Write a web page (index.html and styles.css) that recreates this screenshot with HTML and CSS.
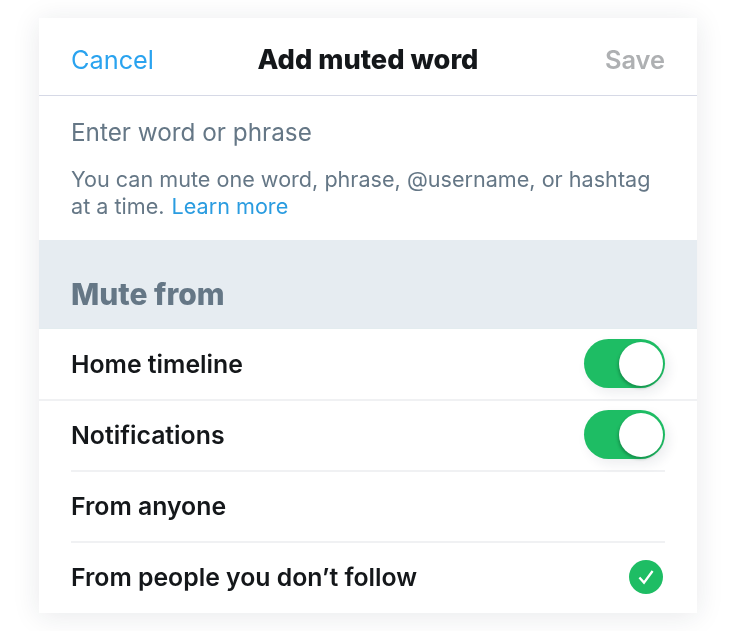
FILE: index.html
```html
<!DOCTYPE html>
<html lang="en">
<head>
<meta charset="utf-8">
<title>Add muted word</title>
<link rel="stylesheet" href="styles.css">
</head>
<body>
<main class="card">
  <header class="topbar">
    <span class="cancel">Cancel</span>
    <h1 class="title">Add muted word</h1>
    <span class="save">Save</span>
  </header>
  <section class="entry">
    <p class="placeholder">Enter word or phrase</p>
    <p class="help">You can mute one word, phrase, @username, or hashtag at a time. <span class="link">Learn more</span></p>
  </section>
  <h2 class="section-head">Mute from</h2>
  <ul class="rows">
    <li class="row row-full">
      <span class="row-label">Home timeline</span>
      <span class="toggle"><span class="knob"></span></span>
    </li>
    <li class="row">
      <span class="row-label">Notifications</span>
      <span class="toggle"><span class="knob"></span></span>
    </li>
    <li class="row">
      <span class="row-label">From anyone</span>
    </li>
    <li class="row row-last">
      <span class="row-label">From people you don’t follow</span>
      <svg class="check" viewBox="0 0 34 34" aria-hidden="true">
        <circle cx="17" cy="17" r="17" fill="#1ebd64"/>
        <path d="M10.4 17.4l4.6 5.2 8.6-11.6" fill="none" stroke="#fff" stroke-width="2.3"/>
      </svg>
    </li>
  </ul>
</main>
</body>
</html>
```
FILE: styles.css
```css
* { box-sizing: border-box; }
html, body { margin: 0; height: 631px; overflow: hidden; background: #fff; }
body {
  padding: 18px 39px;
  font-family: Inter, "Liberation Sans", sans-serif;
}
.card {
  width: 658px;
  height: 595px;
  background: #fff;
  box-shadow: 0 3px 26px rgba(30, 40, 60, 0.1);
  filter: blur(0.35px);
}
.topbar {
  height: 78px;
  padding: 5px 32px 0;
  display: grid;
  grid-template-columns: 1fr auto 1fr;
  align-items: center;
  border-bottom: 1px solid #d6d9e6;
  font-size: 25.3px;
}
.cancel { color: #2aa3ef; }
.title { margin: 0; font-size: 27.2px; font-weight: 800; color: #14171a; }
.save { color: #aeb0b2; font-weight: 600; font-size: 25.4px; justify-self: end; }
.entry { height: 144px; padding: 0 32px; color: #657786; }
.placeholder { margin: 0; padding-top: 21px; font-size: 24.3px; line-height: 30px; }
.help { margin: 0; padding-top: 19px; font-size: 21.6px; line-height: 27px; }
.link { color: #2a9ce0; margin-left: 1px; }
.section-head {
  margin: 0;
  height: 89px;
  padding: 36px 32px 0;
  background: #e6ecf1;
  border-bottom: 1px solid #e3ecef;
  color: #657786;
  font-size: 30px;
  line-height: 36px;
  font-weight: 800;
}
.rows { list-style: none; margin: 0; padding: 0; }
.row {
  height: 71px;
  margin: 0 32px;
  padding-bottom: 1px;
  display: flex;
  align-items: center;
  justify-content: space-between;
  border-bottom: 2px solid #f0f1f3;
  font-size: 24.8px;
  font-weight: 600;
  color: #14171a;
}
.row-full { height: 72px; margin: 0; padding: 0 32px; }
.row-last { border-bottom: 0; height: 70px; padding-bottom: 2px; }
.toggle {
  width: 81px;
  height: 49px;
  margin-bottom: 1px;
  padding: 3px 2px;
  border-radius: 25px;
  background: #1ebd64;
  display: flex;
  justify-content: flex-end;
  box-shadow: 4px 5px 12px rgba(30, 40, 60, 0.08);
}
.knob {
  width: 44px;
  height: 44px;
  border-radius: 50%;
  background: #fff;
  box-shadow: -1px 2px 3px rgba(0, 60, 30, 0.35);
}
.check { width: 34px; height: 34px; flex: none; margin: 0 2px 1px 0; }
```
